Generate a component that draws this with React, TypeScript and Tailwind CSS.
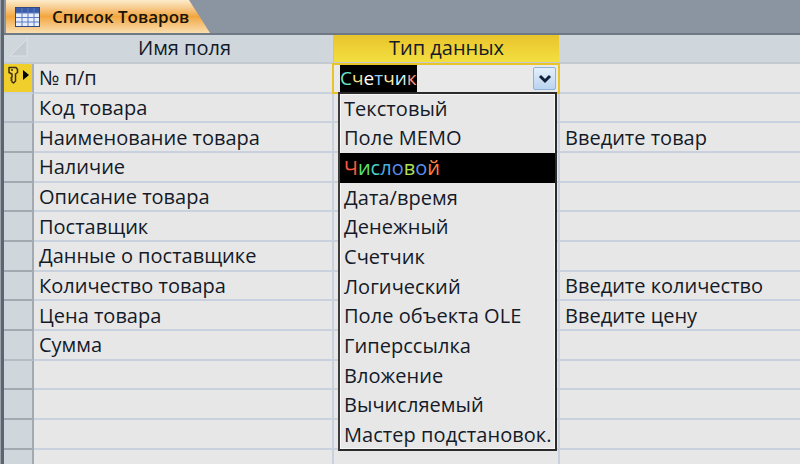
import React from 'react';

const fields = [
  { name: '№ п/п', note: '' },
  { name: 'Код товара', note: '' },
  { name: 'Наименование товара', note: 'Введите товар' },
  { name: 'Наличие', note: '' },
  { name: 'Описание товара', note: '' },
  { name: 'Поставщик', note: '' },
  { name: 'Данные о поставщике', note: '' },
  { name: 'Количество товара', note: 'Введите количество' },
  { name: 'Цена товара', note: 'Введите цену' },
  { name: 'Сумма', note: '' },
  { name: '', note: '' },
  { name: '', note: '' },
  { name: '', note: '' },
  { name: '', note: '' },
];

const types = [
  'Текстовый',
  'Поле МЕМО',
  'Числовой',
  'Дата/время',
  'Денежный',
  'Счетчик',
  'Логический',
  'Поле объекта OLE',
  'Гиперссылка',
  'Вложение',
  'Вычисляемый',
  'Мастер подстановок.',
];

// selected text in the picture has coloured fringes, one colour per letter
const Fringed = ({ text, colors }: { text: string; colors: string[] }) => (
  <>
    {text.split('').map((ch, i) => (
      <span key={i} style={{ color: colors[i % colors.length] }}>
        {ch}
      </span>
    ))}
  </>
);

const TableIcon = () => (
  <svg width="25" height="20" viewBox="0 0 25 20" className="shrink-0">
    <rect x="0.5" y="0.5" width="24" height="19" fill="#e8eefa" stroke="#2f4a86" />
    <rect x="1" y="1" width="23" height="5" fill="#3a5ca8" />
    <path d="M1 6h23M1 10.500h23M1 15h23M7 1v18M13 1v18M19 1v18" stroke="#5b7cc4" strokeWidth="1" fill="none" />
  </svg>
);

const KeyIcon = () => (
  <svg width="15" height="18" viewBox="0 0 15 18">
    <path
      d="M2 1.500h7l1.500 2v3l-2 1.500v7l-2 2-1.500-1v-1l-1-1 1-1-1-1 1-1V8L2 6.500z"
      fill="#f4d23c"
      stroke="#3a2f10"
      strokeWidth="1.500"
      strokeLinejoin="round"
    />
    <circle cx="5" cy="4" r="1" fill="#3a2f10" />
  </svg>
);

export default function App() {
  return (
    <div className="w-[800px] h-[464px] overflow-hidden bg-[#e7e7e7] flex font-['Open_Sans','Noto_Sans',sans-serif] text-[20px] text-[#141a28] leading-none">
      <div className="w-[4px] shrink-0 bg-[#5d656e] border-l border-[#9aa2ab]" />
      <div className="flex-1 min-w-0 flex flex-col">
        {/* tab strip */}
        <div className="h-[35px] shrink-0 bg-[#8b95a2] border-b-2 border-[#6f7986] pl-[2px]">
          <div className="h-[33px] w-[204px] flex items-center gap-[12px] pl-[9px] bg-linear-to-b from-[#fbeccb] via-[#f2a63c] to-[#f9dfae] [clip-path:polygon(0_0,183px_0,204px_33px,0_33px)]">
            <TableIcon />
            <span className="font-semibold text-[17px] text-[#1a1408]">Список Товаров</span>
          </div>
        </div>

        {/* header row */}
        <div className="h-[29px] shrink-0 flex bg-[#cfd6dc] border-b-2 border-[#c4cad2]">
          <div className="w-[30px] shrink-0 pt-[3px] pl-[5px]">
            <svg width="20" height="19" viewBox="0 0 20 19">
              <path d="M1 18L18 1v17z" fill="#c6ccd3" stroke="#dde2e7" />
            </svg>
          </div>
          <div className="w-[300px] shrink-0 flex items-center justify-center pl-[2px] pb-[2px] border-r border-[#b9c3d0]">Имя поля</div>
          <div className="w-[225px] shrink-0 flex items-center justify-center pb-[2px] bg-linear-to-b from-[#e9c42c] to-[#f3df3f]">Тип данных</div>
          <div className="flex-1" />
        </div>

        {/* rows */}
        <div className="relative flex-1 min-h-0">
          {fields.map((f, i) => (
            <div key={i} className="h-[29.67px] flex">
              <div
                className={
                  i === 0
                    ? 'w-[30px] shrink-0 bg-[#f0cf2c] border-r-2 border-b-2 border-r-[#a9afb6] border-b-[#c9d1de] flex items-start pt-[2px] pl-[3px] gap-[1px]'
                    : i === 1 || i === 9
                      ? 'w-[30px] shrink-0 bg-[#cfd6dc] border-r-2 border-b-2 border-r-[#a9afb6] border-b-[#b4bcc6]'
                      : 'w-[30px] shrink-0 bg-[#cfd6dc] border-r-2 border-b-2 border-[#a2a9b1]'
                }
              >
                {i === 0 && (
                  <>
                    <KeyIcon />
                    <span className="mt-[4px] w-0 h-0 border-y-[5px] border-y-transparent border-l-[6px] border-l-black" />
                  </>
                )}
              </div>
              <div className="w-[300px] shrink-0 flex items-center pl-[5px] pt-[1px] border-r-2 border-b-2 border-[#c9d1de]">{f.name}</div>
              <div className="w-[224px] shrink-0 border-b-2 border-[#c9d1de]" />
              <div className="flex-1 flex items-center pl-[5px] pt-[1px] border-l-2 border-b-2 border-[#c9d1de] whitespace-nowrap">{f.note}</div>
            </div>
          ))}

          {/* cell being edited */}
          <div className="absolute left-[328px] top-[-1px] w-[228px] h-[31px] border-2 border-[#e8c32a] bg-[#e9e9e9] flex items-center pl-[6px] pr-[2px] justify-between">
            <span className="h-full flex items-center bg-black whitespace-nowrap text-[19px]">
              <Fringed text="Счетчик" colors={['#6fe3d0', '#f5e08a', '#ffffff', '#8fc8ff', '#ffe9a0', '#c8f0ff', '#ff9f8a']} />
            </span>
            <span className="w-[23px] h-[23px] rounded-[2px] border border-[#8fb2dc] bg-linear-to-b from-[#e4effb] to-[#b9d3f0] flex items-center justify-center">
              <svg width="14" height="10" viewBox="0 0 14 10">
                <path d="M2 2l5 5 5-5" fill="none" stroke="#10203a" strokeWidth="3" />
              </svg>
            </span>
          </div>

          {/* dropdown list */}
          <div className="absolute left-[334px] top-[28px] w-[219px] h-[359px] bg-[#e7e7e7] border-2 border-[#2a2a2a] border-l-[#3c3c3c] shadow-[inset_0_0_0_1px_#f7f7f7]">
            {types.map((t) => (
              <div
                key={t}
                className={
                  t === 'Числовой'
                    ? 'h-[29.67px] flex items-center pl-[4px] whitespace-nowrap bg-black'
                    : 'h-[29.67px] flex items-center pl-[4px] whitespace-nowrap tracking-[0.05px]'
                }
              >
                {t === 'Числовой' ? (
                  <Fringed text={t} colors={['#ff5a3c', '#5fe06a', '#4fd0c0', '#4ab0e0', '#5a8cf0', '#b0e05a', '#5a90f0', '#ff8040']} />
                ) : (
                  t
                )}
              </div>
            ))}
          </div>
        </div>
      </div>
    </div>
  );
}
